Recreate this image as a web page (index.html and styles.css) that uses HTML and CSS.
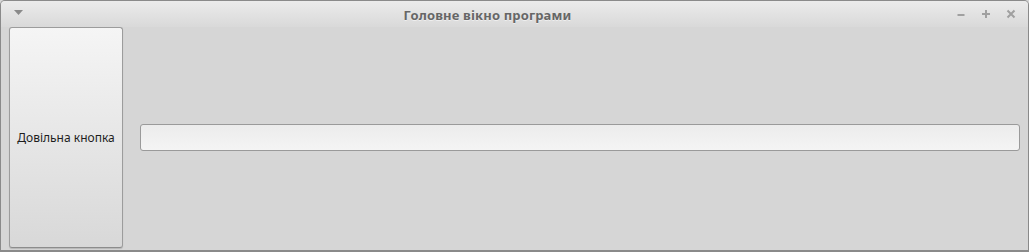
FILE: index.html
```html
<!DOCTYPE html>
<html lang="uk">
<head>
<meta charset="utf-8">
<link rel="stylesheet" href="styles.css">
</head>
<body>
<div class="window">
  <div class="titlebar">
    <svg class="menu-icon" width="9" height="5" viewBox="0 0 9 5"><polygon points="0,0 9,0 4.5,5" fill="#8a8a8a"/></svg>
    <div class="title">Головне вікно програми</div>
    <div class="controls">
      <svg width="10" height="10" viewBox="0 0 10 10"><rect x="1.5" y="5" width="7" height="2" fill="#a0a0a0"/></svg>
      <svg width="10" height="10" viewBox="0 0 10 10"><rect x="1" y="4" width="8" height="2" fill="#a0a0a0"/><rect x="4" y="1" width="2" height="8" fill="#a0a0a0"/></svg>
      <svg width="10" height="10" viewBox="0 0 10 10"><path d="M1.5 1.5 L8.5 8.5 M8.5 1.5 L1.5 8.5" stroke="#a0a0a0" stroke-width="2"/></svg>
    </div>
  </div>
  <div class="content">
    <button class="push">Довільна кнопка</button>
    <div class="lineedit"></div>
  </div>
</div>
</body>
</html>
```
FILE: styles.css
```css
html, body { margin: 0; padding: 0; background: #d6d6d6; }
.window {
  box-sizing: border-box;
  width: 1029px;
  height: 252px;
  border: 1px solid #8a8a8a;
  border-bottom-width: 2px;
  border-radius: 5px 5px 0 0;
  background: #d6d6d6;
  display: flex;
  flex-direction: column;
  overflow: hidden;
  font-family: "Noto Sans", "Open Sans", sans-serif;
}
.titlebar {
  height: 26px;
  flex: none;
  display: flex;
  align-items: center;
  position: relative;
  background: linear-gradient(#ebebeb, #d9d9d9);
}
.menu-icon { margin-left: 13px; margin-top: -3px; }
.title {
  position: absolute;
  left: 0; right: 54px;
  text-align: center;
  font-size: 13px;
  font-weight: bold;
  letter-spacing: 0.15px;
  color: #666;
  top: 5px;
  text-shadow: 0 1px 0 rgba(255,255,255,0.5);
}
.controls {
  margin-left: auto;
  margin-right: 12px;
  display: flex;
  gap: 15px;
}
.content {
  flex: 1;
  display: flex;
  align-items: center;
  padding: 0 8px 2px 8px;
  gap: 17px;
}
.push {
  align-self: stretch;
  width: 114px;
  margin: 0;
  padding: 0;
  border: 1px solid #9c9c9c;
  border-bottom-color: #8c8c8c;
  border-radius: 3px;
  background: linear-gradient(#f5f5f5, #d8d8d8);
  box-shadow: 0 1px 1px rgba(0,0,0,0.15);
  font-family: "Noto Sans", "Open Sans", sans-serif;
  font-size: 12px;
  color: #1e1e1e;
}
.lineedit {
  flex: 1;
  height: 27px;
  box-sizing: border-box;
  border: 1px solid #9a9a9a;
  border-radius: 3px;
  background: linear-gradient(#ececec, #f4f4f4);
}
```
